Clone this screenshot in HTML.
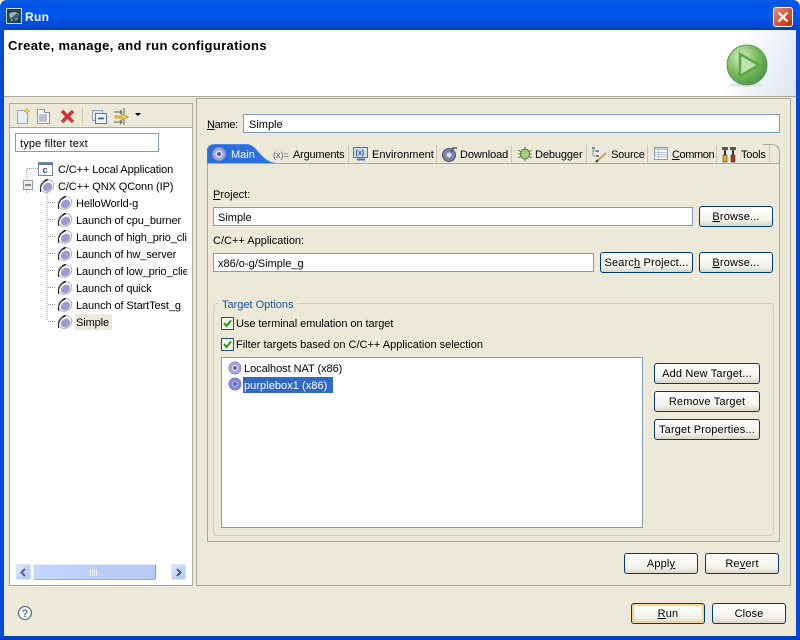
<!DOCTYPE html>
<html><head><meta charset="utf-8"><style>
html,body{margin:0;padding:0;background:#ece9d8}
#w{position:relative;width:800px;height:640px;overflow:hidden;background:#ece9d8;font:11px "Liberation Sans",sans-serif;color:#000}
#w div,#w span.t,#w svg{position:absolute}
.t{position:absolute;white-space:nowrap;line-height:14px;margin-top:1px;letter-spacing:0}
.tr{letter-spacing:-.1px}
.inp{background:#fff;border:1px solid #7f9db9;box-sizing:border-box}
.btn{box-sizing:border-box;border:1px solid #003c74;border-radius:3px;background:linear-gradient(#fff,#f3f2ea 70%,#d9d6c8);text-align:center;line-height:21px;white-space:nowrap;letter-spacing:.15px}
.panel{box-sizing:border-box;border:1px solid #aca899}
u{text-decoration:underline}
</style></head><body><div id="w">
<div style="left:0;top:0;width:800px;height:30px;background:linear-gradient(#0a5ce0,#0255e6 12%,#0058ee 50%,#0148d0 90%,#0242b8);border-radius:7px 7px 0 0"></div>
<div style="left:0;top:30px;width:4px;height:606px;background:#0348d8"></div>
<div style="left:796px;top:30px;width:4px;height:606px;background:#0348d8"></div>
<div style="left:0;top:636px;width:800px;height:4px;background:#0240bf"></div>
<svg style="left:6px;top:8px" width="16" height="16"><rect x=".5" y=".5" width="15" height="15" fill="#24405a" stroke="#c9d2d8"/><path d="M3 6q5-4 10 0l-2 6-6 1z" fill="#9fb4b4"/><path d="M4 11l7-6 2 3-5 5z" fill="#3d5d70"/></svg>
<span class="t" style="left:25px;top:9px;color:#fff;font-size:12px;font-weight:bold;letter-spacing:.3px">Run</span>
<div style="left:773px;top:7px;width:20px;height:20px;box-sizing:border-box;border:1px solid #fff;border-radius:3px;background:linear-gradient(135deg,#e8927a,#d8502c 55%,#b83312)"></div>
<svg style="left:773px;top:7px" width="20" height="20"><path d="M5.500 5.500l9 9M14.500 5.500l-9 9" stroke="#fff" stroke-width="2.200"/></svg>

<div style="left:4px;top:30px;width:792px;height:66px;background:linear-gradient(115deg,#fff 90%,#e6ebf6 97%,#dfe5f2)"></div>
<div style="left:4px;top:96px;width:792px;height:1px;background:#aca899"></div>
<span class="t" style="left:8px;top:37px;font-weight:bold;font-size:13px;letter-spacing:.35px;line-height:15px">Create, manage, and run configurations</span>
<svg style="left:724px;top:43px" width="46" height="46"><defs><radialGradient id="g" cx=".35" cy=".3" r=".8"><stop offset="0" stop-color="#d9eccb"/><stop offset=".5" stop-color="#7fbb5f"/><stop offset="1" stop-color="#3f9247"/></radialGradient></defs><ellipse cx="23" cy="42" rx="18" ry="2" fill="#dfe5e0"/><circle cx="23" cy="22" r="20" fill="url(#g)" stroke="#5b9a4b"/><path d="M16 11L35 22 16 33z" fill="#bfe0b0" stroke="#5ea53e" stroke-width="2.500"/></svg>

<!-- left panel -->
<div class="panel" style="left:9px;top:103px;width:184px;height:483px;background:#fff"></div>
<div style="left:10px;top:104px;width:182px;height:23px;background:#ece9d8;border-bottom:1px solid #aca899"></div>
<svg style="left:15px;top:107px" width="135" height="18">
<path d="M2.500 3.500h7l3 3v10h-10z" fill="#e6eefa" stroke="#9aa7bc"/><path d="M12 1l1 2 2 1-2 1-1 2-1-2-2-1 2-1z" fill="#efd44f" stroke="#b69a2a" stroke-width=".5"/>
<path d="M22.500 2.500h7v3h5v11h-12z" fill="#fff" stroke="#8a93a2"/><path d="M24 8h8M24 10h8M24 12h8M24 14h8" stroke="#6d7fa0"/>
<path d="M47 4l11 11M58 4l-11 11" stroke="#d8333b" stroke-width="3.500"/>
<rect x="77.500" y="3.500" width="10" height="10" fill="#dfe7f3" stroke="#8ea2bc"/><rect x="80.500" y="6.500" width="11" height="10" fill="#eef3fa" stroke="#5b78a0"/><path d="M83 11.500h6" stroke="#2d4f80" stroke-width="1.500"/>
<path d="M99 5h8M99 15h8M105 3l2 2-2 2M105 13l2 2-2 2M109 1v17" stroke="#5c6470" fill="none"/><path d="M100 9h7V7l6 3-6 3v-2h-7z" fill="#f3d76a" stroke="#c39a2a"/>
<path d="M120 6h6l-3 3z" fill="#000"/>
</svg>
<div style="left:82px;top:106px;width:1px;height:18px;background:#cfccbc"></div>
<div class="inp" style="left:15px;top:133px;width:144px;height:19px"></div>
<span class="t" style="left:20px;top:136px;letter-spacing:.15px">type filter text</span>

<svg style="left:10px;top:158px" width="182" height="175"><g fill="none" stroke="#9a9a9a" stroke-dasharray="1 1"><path d="M17 10.500h11M17 10v16M17 32v3M37 35v128M38 44.500h8M38 61.500h8M38 78.500h8M38 95.500h8M38 112.500h8M38 129.500h8M38 146.500h8M38 163.500h8"/></g>
<rect x="13.500" y="22.500" width="9" height="9" fill="#eeeeea" stroke="#8a9aa8"/><path d="M15 27h6" stroke="#223"/>
<rect x="28.500" y="4.500" width="14" height="13" fill="#fff" stroke="#6d87a8"/><rect x="29" y="5" width="13" height="2" fill="#5a7fb5"/><text x="32.500" y="15" font-size="9" font-weight="bold" fill="#2d4f80" font-family="Liberation Mono">c</text>
</svg>
<svg style="left:55px;top:193px" width="20" height="140" fill="none"><g id="l"><ellipse cx="10" cy="10" rx="7" ry="6" fill="#fff" stroke="#a8a8b8" transform="rotate(-35 10 10)"/><ellipse cx="10.500" cy="11" rx="5" ry="4" fill="#9c9cd4" transform="rotate(-35 10.500 11)"/><path d="M3.500 16Q2.500 7 11 3.500" stroke="#222" stroke-width="1"/><path d="M8 5l2-1.500" stroke="#111" stroke-width="1.500"/></g>
<use href="#l" y="17"/><use href="#l" y="34"/><use href="#l" y="51"/><use href="#l" y="68"/><use href="#l" y="85"/><use href="#l" y="102"/><use href="#l" y="119"/></svg>
<svg style="left:37px;top:176px" width="20" height="20" fill="none"><use href="#l"/></svg>
<span class="t tr" style="left:58px;top:162px">C/C++ Local Application</span>
<span class="t tr" style="left:58px;top:179px">C/C++ QNX QConn (IP)</span>
<span class="t tr" style="left:76px;top:196px">HelloWorld-g</span>
<span class="t tr" style="left:76px;top:213px">Launch of cpu_burner</span>
<span class="t tr" style="left:76px;top:230px;width:111px;overflow:hidden">Launch of high_prio_client</span>
<span class="t tr" style="left:76px;top:247px">Launch of hw_server</span>
<span class="t tr" style="left:76px;top:264px;width:111px;overflow:hidden">Launch of low_prio_client</span>
<span class="t tr" style="left:76px;top:281px">Launch of quick</span>
<span class="t tr" style="left:76px;top:298px">Launch of StartTest_g</span>
<div style="left:75px;top:314px;width:37px;height:16px;background:#ece9d8"></div>
<span class="t tr" style="left:76px;top:315px">Simple</span>

<!-- scrollbar -->
<div style="left:16px;top:564px;width:171px;height:16px;background:#fdfdf9"></div>
<div style="left:16px;top:564px;width:15px;height:16px;border-radius:2px;background:linear-gradient(135deg,#dce6fd,#b1c6f3);box-sizing:border-box;border:1px solid #d7e3fb"></div>
<div style="left:171px;top:564px;width:15px;height:16px;border-radius:2px;background:linear-gradient(135deg,#dce6fd,#b1c6f3);box-sizing:border-box;border:1px solid #d7e3fb"></div>
<div style="left:33px;top:564px;width:123px;height:16px;box-sizing:border-box;border:1px solid #e4ebfb;border-bottom-color:#9fb0cc;border-right-color:#8f9fbb;border-radius:2px;background:linear-gradient(90deg,#c6d6fa,#bacdf6 50%,#b8cbf5)"></div>
<svg style="left:16px;top:565px" width="171" height="15" fill="none" stroke="#4d6185" stroke-width="2"><path d="M9 4l-3.500 3.500L9 11M161 4l3.500 3.500L161 11"/><path d="M74.500 4v7M76.500 4v7M78.500 4v7M80.500 4v7" stroke="#eef3ff" stroke-width="1"/></svg>

<!-- right panel -->
<div class="panel" style="left:196px;top:98px;width:595px;height:488px"></div>
<span class="t" style="left:207px;top:117px;letter-spacing:-.3px"><u>N</u>ame:</span>
<div class="inp" style="left:243px;top:114px;width:537px;height:19px"></div>
<span class="t" style="left:249px;top:117px">Simple</span>

<!-- tab folder -->
<div class="panel" style="left:207px;top:163px;width:573px;height:379px;border-color:#aca899;border-top:none"></div>
<svg style="left:207px;top:142px" width="573" height="23"><path d="M0 21.500V10Q0 2.500 8 2.500H40C50 2.500 54 21 70 21.500H0z" fill="#2a6fdc"/><path d="M0 21.500V10Q0 2.500 8 2.500H40C50 2.500 54 21 70 21.500" fill="none" stroke="#4d86e4"/><path d="M66 21.500H572.500V11Q572.500 2.500 564 2.500H556" fill="none" stroke="#aca899"/><g stroke="#c9c6b6"><path d="M141.500 3v18M229.500 3v18M304.500 3v18M379.500 3v18M440.500 3v18M509.500 3v18M562.500 3v18"/></g></svg>
<svg style="left:211px;top:146px" width="16" height="16"><circle cx="8" cy="8" r="6.500" fill="#a7a7d6" stroke="#8a8ac0"/><circle cx="8" cy="8" r="3.500" fill="#e8e8f4"/><circle cx="8" cy="8" r="2" fill="#56569a"/></svg>
<span class="t" style="left:231px;top:147px;color:#fff">Main</span>
<span class="t" style="left:273px;top:147px;font-size:9px;color:#555577">(x)=</span>
<span class="t" style="left:293px;top:147px;letter-spacing:-.2px">Arguments</span>
<svg style="left:353px;top:146px" width="17" height="16"><rect x=".5" y="1.500" width="14" height="10" fill="#cfdcf2" stroke="#4d74ae"/><text x="2.500" y="9" font-size="7" font-weight="bold" fill="#2d4f80" font-family="Liberation Sans">(x)</text><path d="M4 13.500h8" stroke="#4d74ae" stroke-width="2"/></svg>
<span class="t" style="left:372px;top:147px">Environment</span>
<svg style="left:441px;top:145px" width="17" height="18"><circle cx="8" cy="10" r="6.500" fill="#7c83a8" stroke="#4c5276"/><circle cx="8" cy="10" r="2.500" fill="#dfe1ee"/><path d="M10 7l2-4h4" fill="none" stroke="#49525f" stroke-width="1.500"/></svg>
<span class="t" style="left:460px;top:147px;letter-spacing:-.1px">Download</span>
<svg style="left:517px;top:146px" width="16" height="16"><path d="M1 4l14 8M1 12l14-8M8 1v14M1 8h14" stroke="#5d7b42"/><ellipse cx="8" cy="8" rx="4.500" ry="5" fill="#a8cb7c" stroke="#5d7b42"/></svg>
<span class="t" style="left:535px;top:147px;letter-spacing:-.1px">Debugger</span>
<svg style="left:591px;top:146px" width="17" height="17"><path d="M2 2v8M2 5h3M2 10h3" stroke="#7e93ad" fill="none"/><rect x="1" y="1" width="3" height="2" fill="#6986ad"/><rect x="5" y="4" width="3" height="2" fill="#6986ad"/><rect x="5" y="9" width="3" height="2" fill="#6986ad"/><path d="M5 16l10-9" stroke="#c9a24d" stroke-width="2"/><path d="M5 16l2-2" stroke="#444" stroke-width="2"/></svg>
<span class="t" style="left:611px;top:147px;letter-spacing:-.2px">Source</span>
<svg style="left:654px;top:147px" width="15" height="14"><rect x=".5" y=".5" width="13" height="12" fill="#fff" stroke="#8d9cb3"/><rect x="1" y="1" width="12" height="2" fill="#bcc8da"/><path d="M1 5.500h12M1 7.500h12M1 9.500h12M4.500 3v9" stroke="#b8c2d2"/></svg>
<span class="t" style="left:672px;top:147px;letter-spacing:-.4px"><u>C</u>ommon</span>
<svg style="left:721px;top:145px" width="16" height="18"><path d="M1 2h6v3H1zM9 2h6v3H9z" fill="#555"/><rect x="3" y="5" width="2" height="12" fill="#333"/><rect x="2" y="10" width="4" height="7" fill="#d8b028" stroke="#222" stroke-width=".5"/><rect x="11" y="5" width="2" height="12" fill="#333"/><rect x="10" y="10" width="4" height="7" fill="#c03020" stroke="#222" stroke-width=".5"/></svg>
<span class="t" style="left:741px;top:147px;letter-spacing:-.2px">Tools</span>

<span class="t" style="left:213px;top:187px"><u>P</u>roject:</span>
<div class="inp" style="left:213px;top:207px;width:480px;height:19px"></div>
<span class="t" style="left:218px;top:210px">Simple</span>
<div class="btn" style="left:699px;top:206px;width:74px;height:21px"><u>B</u>rowse...</div>
<span class="t" style="left:213px;top:233px">C/C++ Application:</span>
<div class="inp" style="left:213px;top:253px;width:381px;height:19px"></div>
<span class="t" style="left:218px;top:256px">x86/o-g/Simple_g</span>
<div class="btn" style="left:600px;top:252px;width:93px;height:21px">Searc<u>h</u> Project...</div>
<div class="btn" style="left:699px;top:252px;width:74px;height:21px"><u>B</u>rowse...</div>

<!-- group -->
<div style="left:213px;top:303px;width:561px;height:233px;box-sizing:border-box;border:1px solid #d0d0bf;border-radius:4px"></div>
<div style="left:219px;top:298px;width:78px;height:12px;background:#ece9d8"></div>
<span class="t" style="left:222px;top:297px;color:#1b4f9c">Target Options</span>
<svg style="left:221px;top:317px" width="13" height="40"><g id="cb"><rect x=".5" y=".5" width="12" height="12" fill="#f4f4ee" stroke="#1c5180"/><path d="M3 6l2.500 3L10 3.500" fill="none" stroke="#21a121" stroke-width="2"/></g><use href="#cb" y="21"/></svg>
<span class="t" style="left:236px;top:316px;letter-spacing:-.05px">Use terminal emulation on target</span>
<span class="t" style="left:236px;top:337px">Filter targets based on C/C++ Application selection</span>
<div class="inp" style="left:221px;top:357px;width:422px;height:171px"></div>
<svg style="left:228px;top:361px" width="14" height="30"><circle cx="7" cy="7" r="6" fill="#a6a6d8" stroke="#8c8cc4"/><circle cx="7" cy="7" r="3" fill="#e4e4f4"/><circle cx="7" cy="7" r="1.700" fill="#4e4e96"/><g transform="translate(0 16)"><circle cx="7" cy="7" r="6" fill="#8a8ad0" stroke="#7c7cc0"/><circle cx="7" cy="7" r="3" fill="#a8b4e8"/><circle cx="7" cy="7" r="1.700" fill="#4a62b8"/></g></svg>
<span class="t" style="left:244px;top:361px;letter-spacing:-.05px">Localhost NAT (x86)</span>
<div style="left:243px;top:377px;width:90px;height:16px;background:#316ac5"></div>
<span class="t" style="left:244px;top:378px;color:#fff;letter-spacing:.05px">purplebox1 (x86)</span>
<div class="btn" style="left:654px;top:363px;width:106px;height:21px">Add New Target...</div>
<div class="btn" style="left:654px;top:391px;width:106px;height:21px">Remove Target</div>
<div class="btn" style="left:654px;top:419px;width:106px;height:21px">Target Properties...</div>

<div class="btn" style="left:624px;top:553px;width:74px;height:21px">Appl<u>y</u></div>
<div class="btn" style="left:705px;top:553px;width:74px;height:21px">Re<u>v</u>ert</div>
<svg style="left:17px;top:605px" width="16" height="16"><circle cx="8" cy="8" r="6.500" fill="#fbfbf8" stroke="#5d7488" stroke-width="1.300"/><text x="8" y="12" text-anchor="middle" font-size="11" font-weight="bold" fill="#5d7488" font-family="Liberation Sans">?</text></svg>
<div class="btn" style="left:631px;top:603px;width:74px;height:21px;box-shadow:inset 0 0 0 2px #f6d48a"><u>R</u>un</div>
<div class="btn" style="left:712px;top:603px;width:74px;height:21px">Close</div>
</div></body></html>
